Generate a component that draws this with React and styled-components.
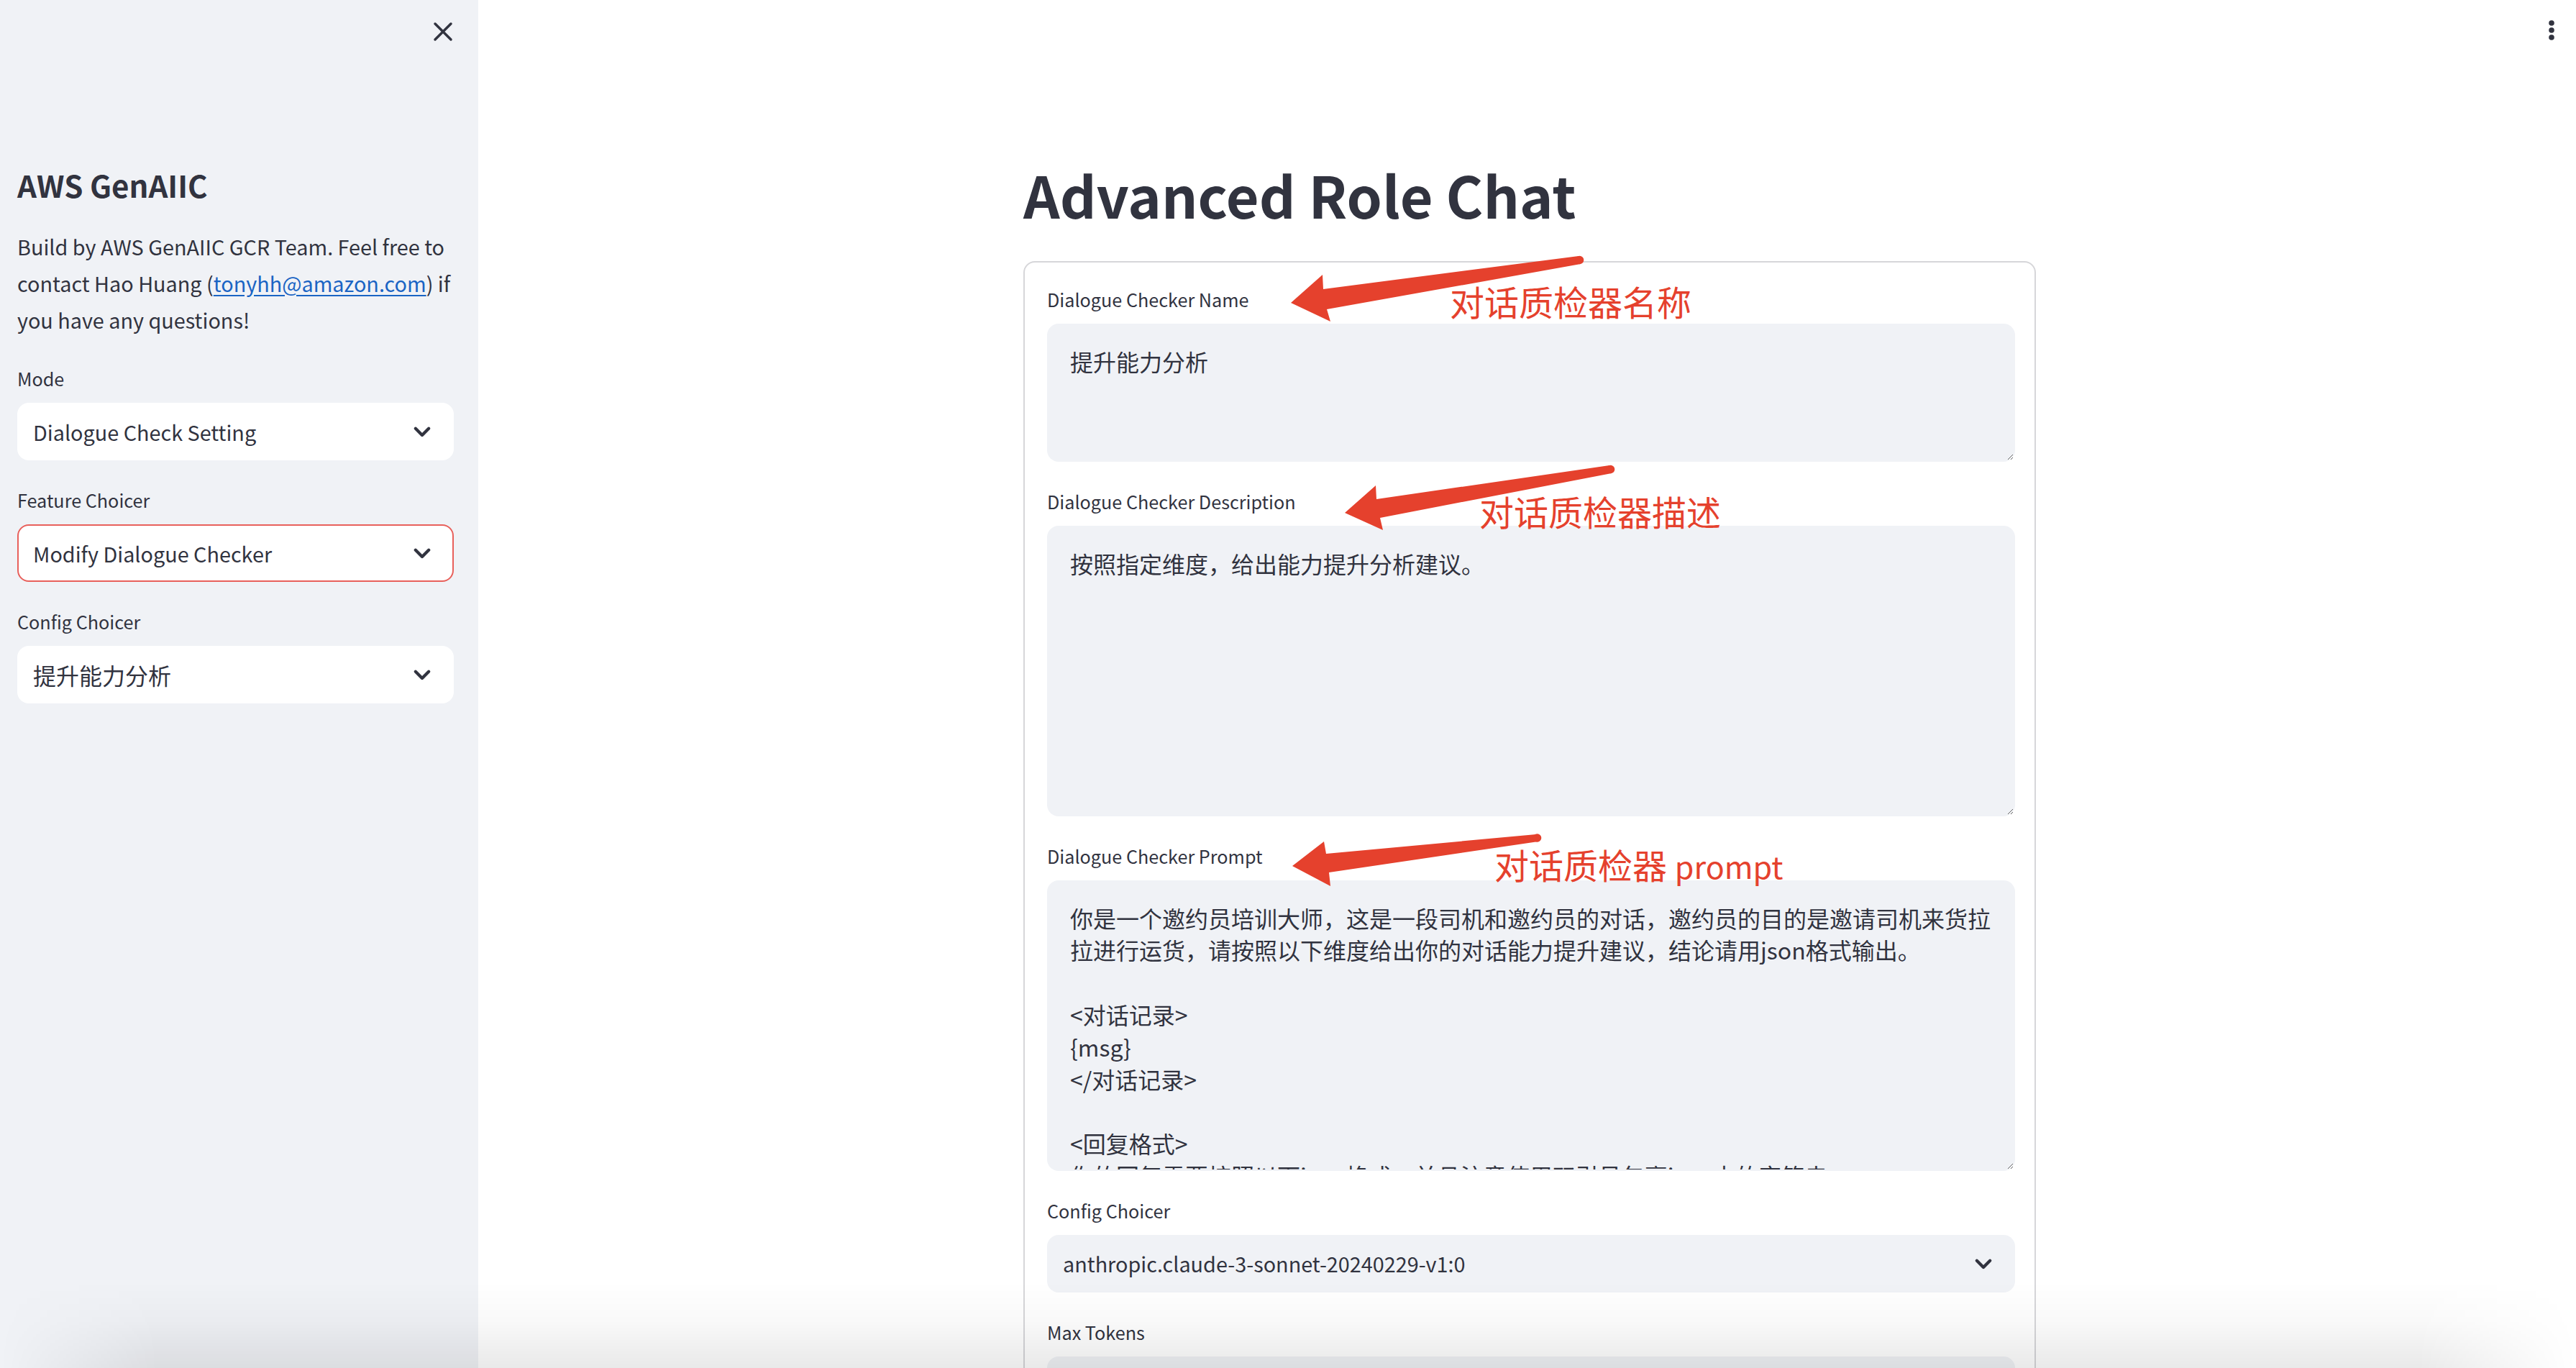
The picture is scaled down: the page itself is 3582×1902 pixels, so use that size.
import React from "react";
import styled, { createGlobalStyle } from "styled-components";

const GlobalStyle = createGlobalStyle`
  html,
  body {
    margin: 0;
    padding: 0;
    height: 100%;
    overflow: hidden;
    background: #ffffff;
  }
  #root {
    height: 100%;
  }
  * {
    box-sizing: border-box;
  }
  body {
    font-family: "Noto Sans CJK SC", "Noto Sans", sans-serif;
    color: #31333f;
  }
`;

const Page = styled.div`
  position: relative;
  display: flex;
  height: 100vh;
  overflow: hidden;
`;

/* ---------- sidebar ---------- */

const Sidebar = styled.aside`
  flex: 0 0 665px;
  width: 665px;
  min-width: 0;
  overflow: hidden;
  background: #f0f2f6;
  display: flex;
  flex-direction: column;
`;

const CloseRow = styled.div`
  flex-shrink: 0;
  height: 88px;
  display: flex;
  align-items: center;
  justify-content: flex-end;
  padding-right: 27px;
  color: #31333f;
`;

const SideContent = styled.div`
  flex-shrink: 0;
  display: flex;
  flex-direction: column;
  padding: 140px 34px 0 24px;
`;

const SideHeading = styled.h2`
  margin: 0 0 31px;
  font-size: 42px;
  line-height: 57.6px;
  font-weight: 700;
  color: #31333f;
`;

const Paragraph = styled.p`
  margin: 0 0 35px;
  font-size: 28.8px;
  line-height: 51.2px;
  white-space: nowrap;
`;

const MailLink = styled.a`
  color: #1a64c4;
  text-decoration: underline;
  text-underline-offset: 4px;
`;

const Fields = styled.div`
  display: flex;
  flex-direction: column;
  gap: 34px;
`;

const Field = styled.div`
  display: flex;
  flex-direction: column;
`;

const Label = styled.label`
  display: block;
  font-size: 25.2px;
  line-height: 42px;
  margin-bottom: 13px;
  color: #31333f;
`;

const SelectBox = styled.div`
  height: 80px;
  border-radius: 16px;
  border: 2px solid ${(p) => (p.$focused ? "#e8605b" : "transparent")};
  background: ${(p) => (p.$grey ? "#f0f2f6" : "#ffffff")};
  display: flex;
  align-items: center;
  justify-content: space-between;
  padding: 0 22px 0 20px;
  font-size: ${(p) => (p.$cjk ? 32 : 28.8)}px;
  color: #31333f;
  white-space: nowrap;
`;

/* ---------- main ---------- */

const Main = styled.main`
  flex: 1;
  min-width: 0;
  display: flex;
  flex-direction: column;
  align-items: center;
  padding-left: 7px;
`;

const Header = styled.header`
  flex-shrink: 0;
  align-self: stretch;
  height: 84px;
  display: flex;
  align-items: center;
  justify-content: flex-end;
  padding-right: 24px;
  color: #31333f;
`;

const Block = styled.section`
  flex-shrink: 0;
  width: 1408px;
  padding-top: 133px;
`;

const Title = styled.h1`
  margin: 0 0 40px;
  font-size: 79px;
  line-height: 105.6px;
  font-weight: 700;
  color: #31333f;
`;

const FormBox = styled.div`
  border: 2px solid #d6d6d9;
  border-radius: 16px;
  padding: 30px 27px 0 31px;
`;

const TextArea = styled.textarea`
  display: block;
  width: 100%;
  height: ${(p) => p.$h}px;
  background: #f0f2f6;
  border: 2px solid transparent;
  border-radius: 16px;
  padding: 28px 20px 28px 30px;
  font-family: inherit;
  font-size: 32px;
  line-height: 44.8px;
  color: #31333f;
  resize: vertical;
  overflow: hidden;
  outline: none;
`;

const NumberBox = styled.div`
  height: 80px;
  border-radius: 16px;
  background: #f0f2f6;
`;

/* ---------- overlays ---------- */

const BottomShade = styled.div`
  position: absolute;
  left: 0;
  right: 0;
  bottom: 0;
  height: 120px;
  pointer-events: none;
  background: linear-gradient(
    to bottom,
    rgba(0, 0, 0, 0) 0%,
    rgba(0, 0, 0, 0.025) 45%,
    rgba(0, 0, 0, 0.085) 100%
  );
  -webkit-mask-image: linear-gradient(
    to right,
    transparent 0,
    #000 220px,
    #000 calc(100% - 220px),
    transparent 100%
  );
  mask-image: linear-gradient(
    to right,
    transparent 0,
    #000 220px,
    #000 calc(100% - 220px),
    transparent 100%
  );
`;

const Annotations = styled.div`
  position: absolute;
  inset: 0;
  pointer-events: none;
`;

const ArrowLayer = styled.svg`
  position: absolute;
  left: 0;
  top: 0;
`;

const Note = styled.span`
  position: absolute;
  left: ${(p) => p.$x}px;
  top: ${(p) => p.$y}px;
  font-family: "Noto Sans CJK SC", sans-serif;
  font-size: 48px;
  line-height: 48px;
  font-weight: 400;
  color: #e5412d;
  white-space: nowrap;
`;

const NoteLatin = styled.span`
  font-size: 43px;
`;

/* ---------- icons ---------- */

const Chevron = () => (
  <svg width="40" height="40" viewBox="0 0 24 24" fill="none">
    <path
      d="M6.5 9.5l5.5 5.5 5.5-5.5"
      stroke="currentColor"
      strokeWidth="2.6"
      strokeLinecap="round"
      strokeLinejoin="round"
    />
  </svg>
);

const CloseIcon = () => (
  <svg width="44" height="44" viewBox="0 0 24 24" fill="none">
    <path
      d="M6 6l12 12M18 6L6 18"
      stroke="currentColor"
      strokeWidth="1.9"
      strokeLinecap="round"
    />
  </svg>
);

const Kebab = () => (
  <svg width="20" height="40" viewBox="0 0 20 40">
    <circle cx="10" cy="10" r="3.8" fill="currentColor" />
    <circle cx="10" cy="20" r="3.8" fill="currentColor" />
    <circle cx="10" cy="30" r="3.8" fill="currentColor" />
  </svg>
);

const arrows = [
  {
    pts: "1795,421 1839,382 1840,402 2195,356 2198,367 1845,430 1850,447",
    cx: 2196.5,
    cy: 361.5,
  },
  {
    pts: "1870,713 1913,675 1914,694 2238,647 2241,658 1919,720 1923,737",
    cx: 2239.5,
    cy: 652.5,
  },
  {
    pts: "1797,1204 1841,1170 1844,1187 2136,1160 2139,1170 1848,1213 1850,1232",
    cx: 2137.5,
    cy: 1165,
  },
];

const promptText = `你是一个邀约员培训大师，这是一段司机和邀约员的对话，邀约员的目的是邀请司机来货拉拉进行运货，请按照以下维度给出你的对话能力提升建议，结论请用json格式输出。

<对话记录>
{msg}
</对话记录>

<回复格式>
你的回复需要按照以下json格式，并且注意使用双引号包裹json中的字符串。`;

const App = () => {
  return (
    <>
      <GlobalStyle />
      <Page>
        <Sidebar>
          <CloseRow>
            <CloseIcon />
          </CloseRow>
          <SideContent>
            <SideHeading>AWS GenAIIC</SideHeading>
            <Paragraph>
              Build by AWS GenAIIC GCR Team. Feel free to
              <br />
              contact Hao Huang (
              <MailLink href="mailto:tonyhh@amazon.com">tonyhh@amazon.com</MailLink>
              ) if
              <br />
              you have any questions!
            </Paragraph>
            <Fields>
              <Field>
                <Label>Mode</Label>
                <SelectBox>
                  Dialogue Check Setting
                  <Chevron />
                </SelectBox>
              </Field>
              <Field>
                <Label>Feature Choicer</Label>
                <SelectBox $focused>
                  Modify Dialogue Checker
                  <Chevron />
                </SelectBox>
              </Field>
              <Field>
                <Label>Config Choicer</Label>
                <SelectBox $cjk>
                  提升能力分析
                  <Chevron />
                </SelectBox>
              </Field>
            </Fields>
          </SideContent>
        </Sidebar>

        <Main>
          <Header>
            <Kebab />
          </Header>
          <Block>
            <Title>Advanced Role Chat</Title>
            <FormBox>
              <Fields>
                <Field>
                  <Label>Dialogue Checker Name</Label>
                  <TextArea $h={192} defaultValue="提升能力分析" />
                </Field>
                <Field>
                  <Label>Dialogue Checker Description</Label>
                  <TextArea $h={404} defaultValue="按照指定维度，给出能力提升分析建议。" />
                </Field>
                <Field>
                  <Label>Dialogue Checker Prompt</Label>
                  <TextArea $h={404} defaultValue={promptText} />
                </Field>
                <Field>
                  <Label>Config Choicer</Label>
                  <SelectBox $grey>
                    anthropic.claude-3-sonnet-20240229-v1:0
                    <Chevron />
                  </SelectBox>
                </Field>
                <Field>
                  <Label>Max Tokens</Label>
                  <NumberBox />
                </Field>
              </Fields>
            </FormBox>
          </Block>
        </Main>

        <BottomShade />

        <Annotations>
          <ArrowLayer width="3582" height="1902" viewBox="0 0 3582 1902">
            {arrows.map((a, i) => (
              <g key={i} fill="#e5412d">
                <polygon points={a.pts} />
                <circle cx={a.cx} cy={a.cy} r="5.8" />
              </g>
            ))}
          </ArrowLayer>
          <Note $x={2016} $y={394}>对话质检器名称</Note>
          <Note $x={2057} $y={686}>对话质检器描述</Note>
          <Note $x={2078} $y={1177}>
            对话质检器 <NoteLatin>prompt</NoteLatin>
          </Note>
        </Annotations>
      </Page>
    </>
  );
};

export default App;
